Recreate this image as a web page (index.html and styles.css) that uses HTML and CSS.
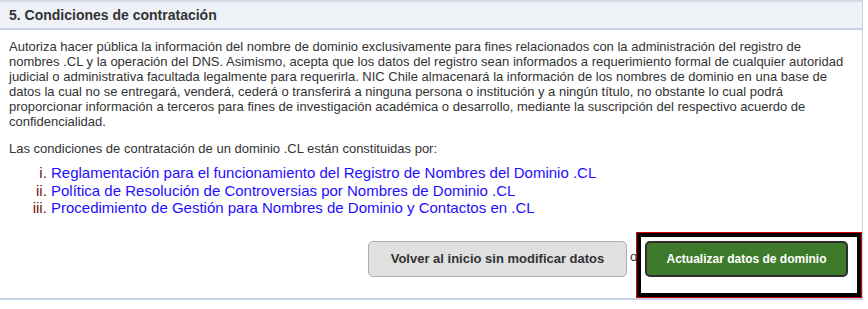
FILE: index.html
```html
<!DOCTYPE html>
<html lang="es">
<head>
  <meta charset="UTF-8" />
  <title>Condiciones de contratación</title>
  <link rel="stylesheet" href="styles.css">
</head>
<body>

  <!-- Panel condiciones -->
  <div class="panel">
    <div class="panel-head">5. Condiciones de contratación</div>
    <div class="panel-body">
      <p class="terms">Autoriza hacer pública la información del nombre de dominio exclusivamente para fines relacionados con la administración del registro de nombres .CL y la operación del DNS. Asimismo, acepta que los datos del registro sean informados a requerimiento formal de cualquier autoridad judicial o administrativa facultada legalmente para requerirla. NIC Chile almacenará la información de los nombres de dominio en una base de datos la cual no se entregará, venderá, cederá o transferirá a ninguna persona o institución y a ningún título, no obstante lo cual podrá proporcionar información a terceros para fines de investigación académica o desarrollo, mediante la suscripción del respectivo acuerdo de confidencialidad.</p>
      <p class="terms intro">Las condiciones de contratación de un dominio .CL están constituidas por:</p>
      <ol class="docs">
        <li><a href="#">Reglamentación para el funcionamiento del Registro de Nombres del Dominio .CL</a></li>
        <li><a href="#">Política de Resolución de Controversias por Nombres de Dominio .CL</a></li>
        <li><a href="#">Procedimiento de Gestión para Nombres de Dominio y Contactos en .CL</a></li>
      </ol>

      <div class="actions">
        <button class="btn btn-back">Volver al inicio sin modificar datos</button>
        <span class="or">o</span>
        <div class="focus-box">
          <button class="btn btn-save">Actualizar datos de dominio</button>
        </div>
      </div>
    </div>
  </div>

</body>
</html>
```

FILE: styles.css
```css
body {
  margin: 0;
  font-family: "Liberation Sans", Arial, sans-serif;
  color: #333;
  background: #fff;
}

.panel {
  width: 862px;
  border-top: 2px solid #d6dde9;
  border-right: 1px solid #c5d2e8;
  border-bottom: 2px solid #c5d2e8;
}

.panel-head {
  background: #eef1f6;
  border-bottom: 2px solid #c8d3e5;
  padding: 4px 9px 0;
  height: 22px;
  font-weight: bold;
  font-size: 14px;
  line-height: 18px;
  color: #333;
}

.panel-body {
  padding: 9px 0 0 9px;
}

.terms {
  margin: 0 14px 12px 0;
  font-size: 13px;
  line-height: 15px;
}

.terms.intro {
  margin-bottom: 8px;
}

.docs {
  list-style-type: lower-roman;
  margin: 0;
  padding-left: 42px;
  font-size: 15px;
  line-height: 17.5px;
  color: #6e1414;
}

.docs a {
  color: #1f0dff;
  text-decoration: none;
}

.actions {
  display: flex;
  justify-content: flex-end;
  align-items: flex-start;
  margin-top: 15px;
}

.btn {
  font-family: "Liberation Sans", Arial, sans-serif;
  font-weight: bold;
  height: 36px;
  border-radius: 5px;
  cursor: pointer;
}

.btn-back {
  width: 259px;
  margin-top: 9px;
  background: #e0e0e0;
  border: 1px solid #adadad;
  color: #333;
  font-size: 13px;
}

.or {
  margin: 17px 0 0 3px;
  width: 7px;
  overflow: hidden;
  font-size: 13px;
  line-height: 15px;
}

.focus-box {
  border: 4px solid #000;
  box-shadow: 0 0 0 1px #d40000;
  margin: 1px 1px 1px 0;
  padding: 4px 9px 16px 4px;
}

.btn-save {
  display: block;
  width: 203px;
  background: #3f7a2c;
  border: 2px solid #2e2e2e;
  color: #fff;
  font-size: 12px;
}
```
